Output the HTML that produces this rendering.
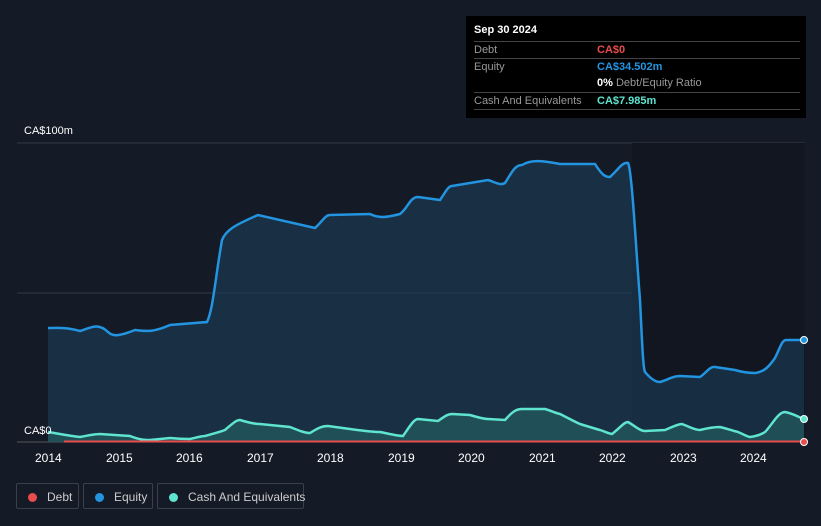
<!DOCTYPE html><html><head><style>
body{margin:0;width:821px;height:526px;background:#151b26;font-family:"Liberation Sans",sans-serif;overflow:hidden;position:relative}
.tt{position:absolute;left:466px;top:16px;width:340px;height:102px;background:#000;color:#fff;font-size:11px}
.r{position:absolute;left:8px;width:326px;border-top:1px solid #444;height:16px;line-height:16px}
.r span{position:absolute;left:123px;font-weight:bold}
.lab{color:#999}
.leg{position:absolute;top:483px;height:26px;border:1px solid #3a404b;border-radius:2px;color:#ccc;font-size:12px;line-height:26px;box-sizing:border-box;white-space:nowrap}
.leg i{display:inline-block;width:9px;height:9px;border-radius:50%;margin:0 10px 0 11px;vertical-align:-1px}
.ax{position:absolute;top:451px;color:#fff;font-size:12px}
</style></head><body>
<svg width="821" height="526" style="position:absolute;left:0;top:0">
<line x1="17" y1="143" x2="805" y2="143" stroke="#333a45"/>
<line x1="17" y1="293" x2="805" y2="293" stroke="#333a45"/>
<line x1="17" y1="442" x2="805" y2="442" stroke="#555"/>
<rect x="632" y="143" width="173" height="299" fill="#111621"/>
<path d="M48,328 C56,328 65,327 80,331 C90,328 98,322 108,332 C113,337 120,336 135,330 C145,331 152,333 170,325 L207,322 C213,310 215,280 222,240 C226,230 235,225 258,215 L315,228 C322,222 325,215 330,215 L370,214 C378,218 385,218 400,214 C408,208 410,197 418,197 L440,200 C445,193 448,186 452,186 L488,180 C495,182 500,186 505,183 C512,172 515,165 522,165 C530,160 540,160 560,164 L595,164 C602,175 605,177 610,177 C618,170 622,162 628,163 C632,170 636,250 640,300 C642,340 643,368 645,372 C650,378 655,382 660,382 C668,380 672,376 680,376 L700,377 C706,373 710,366 715,367 L735,370 C745,373 752,373 755,373 C765,372 770,365 775,358 C780,348 782,340 786,340 L804,340 L804,442 L48,442Z" fill="#1a3a55" fill-opacity=".65"/>
<path d="M48,328 C56,328 65,327 80,331 C90,328 98,322 108,332 C113,337 120,336 135,330 C145,331 152,333 170,325 L207,322 C213,310 215,280 222,240 C226,230 235,225 258,215 L315,228 C322,222 325,215 330,215 L370,214 C378,218 385,218 400,214 C408,208 410,197 418,197 L440,200 C445,193 448,186 452,186 L488,180 C495,182 500,186 505,183 C512,172 515,165 522,165 C530,160 540,160 560,164 L595,164 C602,175 605,177 610,177 C618,170 622,162 628,163 C632,170 636,250 640,300 C642,340 643,368 645,372 C650,378 655,382 660,382 C668,380 672,376 680,376 L700,377 C706,373 710,366 715,367 L735,370 C745,373 752,373 755,373 C765,372 770,365 775,358 C780,348 782,340 786,340 L804,340" fill="none" stroke="#2394e0" stroke-width="2.5"/>
<path d="M48,432 C60,434 70,436 80,437 C90,435 95,434 100,434 L130,436 C140,440 145,440 150,440 L170,438 C180,439 185,439 190,439 C198,437 202,436 205,436 C215,433 220,432 225,430 C232,424 236,420 240,420 C250,423 255,424 260,424 L290,427 C300,431 305,433 310,433 C318,428 322,426 328,426 L350,429 C365,431 372,432 380,432 C390,434 398,436 403,436 C410,426 414,419 418,419 L438,421 C445,416 448,414 452,414 L470,415 C480,418 484,419 488,419 L505,420 C512,412 516,409 522,409 L545,409 C552,411 555,413 560,414 C570,419 575,422 580,424 C590,427 596,429 600,430 C606,432 610,434 612,434 C620,428 624,422 628,422 C635,426 640,431 645,431 L665,430 C672,427 678,424 682,424 C690,427 695,430 700,430 C708,428 714,427 720,427 C728,429 734,431 738,432 C745,435 748,437 750,437 C758,436 762,434 765,432 C772,425 778,412 785,412 C795,414 800,418 804,419 L804,442 L48,442Z" fill="#2a6f6a" fill-opacity=".5"/>
<path d="M48,432 C60,434 70,436 80,437 C90,435 95,434 100,434 L130,436 C140,440 145,440 150,440 L170,438 C180,439 185,439 190,439 C198,437 202,436 205,436 C215,433 220,432 225,430 C232,424 236,420 240,420 C250,423 255,424 260,424 L290,427 C300,431 305,433 310,433 C318,428 322,426 328,426 L350,429 C365,431 372,432 380,432 C390,434 398,436 403,436 C410,426 414,419 418,419 L438,421 C445,416 448,414 452,414 L470,415 C480,418 484,419 488,419 L505,420 C512,412 516,409 522,409 L545,409 C552,411 555,413 560,414 C570,419 575,422 580,424 C590,427 596,429 600,430 C606,432 610,434 612,434 C620,428 624,422 628,422 C635,426 640,431 645,431 L665,430 C672,427 678,424 682,424 C690,427 695,430 700,430 C708,428 714,427 720,427 C728,429 734,431 738,432 C745,435 748,437 750,437 C758,436 762,434 765,432 C772,425 778,412 785,412 C795,414 800,418 804,419" fill="none" stroke="#5ee4cf" stroke-width="2.5"/>
<line x1="64" y1="441.5" x2="804" y2="441.5" stroke="#e84c4c" stroke-width="2"/>
<circle cx="804" cy="340" r="3.5" fill="#2394e0" stroke="#fff" stroke-width="1"/>
<circle cx="804" cy="419" r="3.5" fill="#5ee4cf" stroke="#fff" stroke-width="1"/>
<circle cx="804" cy="442" r="3.5" fill="#e84c4c" stroke="#fff" stroke-width="1"/>
</svg>
<div style="position:absolute;left:24px;top:125px;color:#fff;font-size:11px">CA$100m</div>
<div style="position:absolute;left:24px;top:425px;color:#fff;font-size:11px">CA$0</div>
<div class="ax" style="left:35px">2014</div><div class="ax" style="left:106px">2015</div><div class="ax" style="left:176px">2016</div><div class="ax" style="left:247px">2017</div><div class="ax" style="left:317px">2018</div><div class="ax" style="left:388px">2019</div><div class="ax" style="left:458px">2020</div><div class="ax" style="left:529px">2021</div><div class="ax" style="left:599px">2022</div><div class="ax" style="left:670px">2023</div><div class="ax" style="left:740px">2024</div>
<div class="tt">
<div style="position:absolute;left:8px;top:8px;font-weight:bold">Sep 30 2024</div>
<div class="r" style="top:25px"><b class="lab" style="font-weight:normal">Debt</b><span style="color:#e84c4c">CA$0</span></div>
<div class="r" style="top:42px"><b class="lab" style="font-weight:normal">Equity</b><span style="color:#2394e0">CA$34.502m</span></div>
<div class="r" style="top:59px;border:0"><span style="color:#fff">0% <b style="color:#999;font-weight:normal">Debt/Equity Ratio</b></span></div>
<div class="r" style="top:76px"><b class="lab" style="font-weight:normal">Cash And Equivalents</b><span style="color:#5ee4cf">CA$7.985m</span></div>
<div class="r" style="top:93px;height:0"></div>
</div>
<div class="leg" style="left:16px;width:63px"><i style="background:#e84c4c"></i>Debt</div>
<div class="leg" style="left:83px;width:70px"><i style="background:#2394e0"></i>Equity</div>
<div class="leg" style="left:157px;width:147px"><i style="background:#5ee4cf"></i>Cash And Equivalents</div>
</body></html>
